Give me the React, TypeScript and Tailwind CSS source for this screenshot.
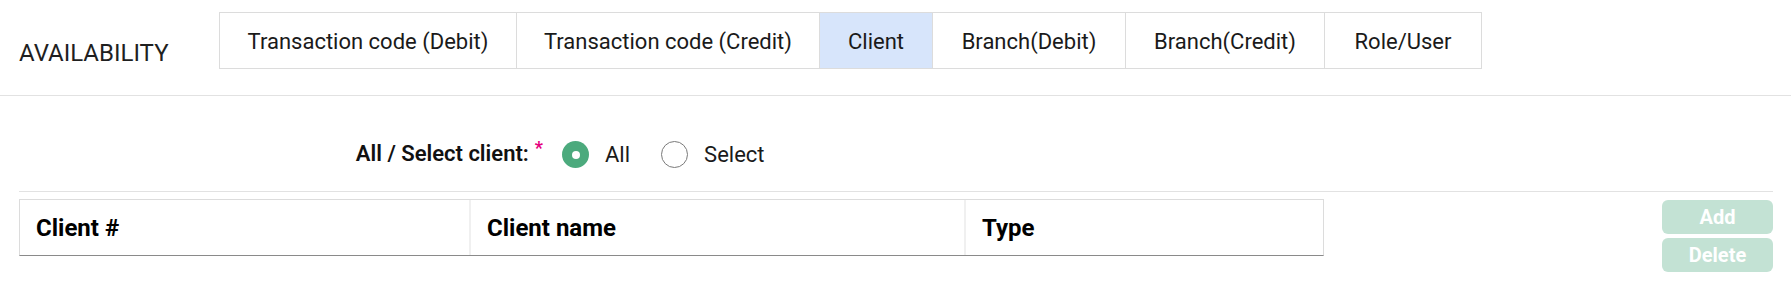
const tabs = [
  { label: 'Transaction code (Debit)', w: 'w-[297px]' },
  { label: 'Transaction code (Credit)', w: 'w-[303px]' },
  { label: 'Client', w: 'w-[113px]', active: true },
  { label: 'Branch(Debit)', w: 'w-[193px]' },
  { label: 'Branch(Credit)', w: 'w-[199px]' },
  { label: 'Role/User', w: 'w-[156px]' },
];

function Radio({ checked, label }: { checked?: boolean; label: string }) {
  return (
    <label className="flex items-center gap-4">
      {checked ? (
        <span className="flex h-[27px] w-[27px] items-center justify-center rounded-full bg-[#4caa7d]">
          <span className="h-[8px] w-[8px] rounded-full bg-white" />
        </span>
      ) : (
        <span className="h-[27px] w-[27px] rounded-full border border-[#7a7a7a] bg-white" />
      )}
      <span className="text-[22px] text-[#1a1a1a]">{label}</span>
    </label>
  );
}

export default function App() {
  return (
    <div className="min-h-[288px] w-full bg-white font-['Roboto',sans-serif] text-[#1a1a1a]">
      {/* header with tabs */}
      <div className="flex items-start border-b border-[#e2e2e2] pb-[26px] pl-[19px] pt-[12px]">
        <div className="mt-[27px] w-[200px] text-[24px] leading-[28px] text-[#1f1f1f]">AVAILABILITY</div>
        <div className="flex h-[57px] border border-[#dcdcdc]">
          {tabs.map((t, i) => (
            <div
              key={t.label}
              className={`flex items-center justify-center pt-[2px] text-[22px] ${t.w} ${
                i < tabs.length - 1 ? 'border-r border-[#dcdcdc]' : ''
              } ${t.active ? 'bg-[#d7e5fb]' : 'bg-white'}`}
            >
              {t.label}
            </div>
          ))}
        </div>
      </div>

      <div className="ml-[19px] mr-[18px]">
        {/* all / select */}
        <div className="border-b border-[#e2e2e2] pb-[23px] pt-[45px]">
          <div className="flex h-[27px] items-center">
            <div className="flex w-[524px] items-center justify-end">
              <span className="pb-[3px] text-[22px] font-semibold text-[#111]">All / Select client:</span>
              <span className="ml-[6px] mt-[2px] self-start text-[18px] font-bold leading-none text-[#e5007d]">*</span>
            </div>
            <div className="ml-[19px] flex items-center gap-[31px]">
              <Radio checked label="All" />
              <Radio label="Select" />
            </div>
          </div>
        </div>

        {/* table + actions */}
        <div className="flex items-start justify-between pt-[7px]">
          <div className="flex h-[57px] w-[1305px] border border-[#dcdcdc] border-b-[#8a8a8a] text-[24px] font-bold text-black">
            <div className="flex w-[449px] items-center pl-4">Client #</div>
            <div className="flex w-[495px] items-center border-l-2 border-[#f0f0f0] pl-4">Client name</div>
            <div className="flex flex-1 items-center border-l-2 border-[#f0f0f0] pl-4">Type</div>
          </div>
          <div className="mt-[1px] flex w-[111px] flex-col gap-[4px]">
            <button className="h-[34px] rounded-md bg-[#c3e2d4] text-[20px] font-bold text-white">Add</button>
            <button className="h-[34px] rounded-md bg-[#c3e2d4] text-[20px] font-bold text-white">Delete</button>
          </div>
        </div>
      </div>
    </div>
  );
}
